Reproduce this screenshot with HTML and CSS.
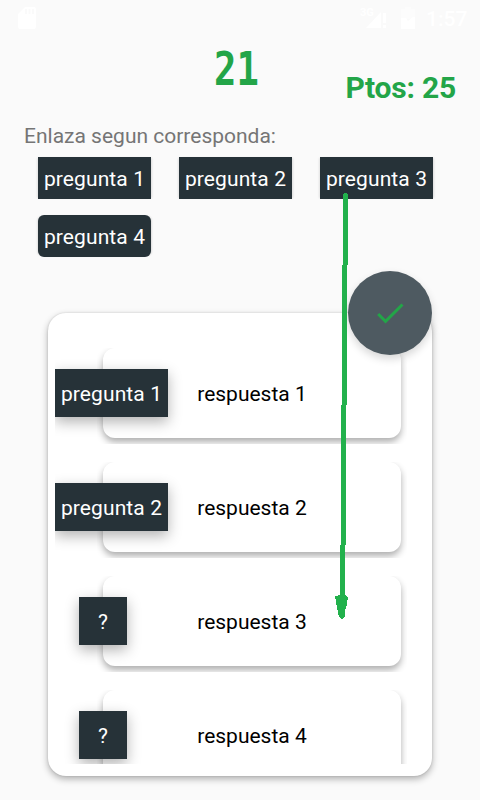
FILE: index.html
```html
<!DOCTYPE html>
<html lang="es">
<head>
<meta charset="utf-8">
<title>Enlaza</title>
<link rel="stylesheet" href="styles.css">
</head>
<body>
<div class="screen">
  <header class="status">
    <svg class="sd" width="18" height="22" viewBox="0 0 18 22"><path fill="#fff" fill-rule="evenodd" d="M7 0H16Q18 0 18 2V20Q18 22 16 22H2Q0 22 0 20V7ZM7 2V7H9V2ZM10.500 2V7H12.500V2ZM14 2V7H16V2Z"/></svg>
    <div class="status-right">
      <span class="net">3G</span>
      <svg class="signal" width="22" height="20" viewBox="0 0 22 20"><path fill="#fff" d="M0 20L15 4V20ZM17 5H20V15H17ZM17 17H20V20H17Z"/></svg>
      <svg class="battery" width="14" height="22" viewBox="0 0 14 22"><path fill="#fcfcfc" d="M4 0H10V2H14V12H0V2H4Z"/><path fill="#fff" d="M0 11H5L7 14L12 10H14V22H0Z"/></svg>
      <span class="clock">1:57</span>
    </div>
  </header>
  <div class="score-bar">
    <span class="timer">21</span>
    <span class="points">Ptos: 25</span>
  </div>
  <p class="hint">Enlaza segun corresponda:</p>
  <div class="questions">
    <div class="chip">pregunta 1</div>
    <div class="chip">pregunta 2</div>
    <div class="chip">pregunta 3</div>
    <div class="chip rounded">pregunta 4</div>
  </div>
  <main class="panel">
    <div class="list">
      <div class="row"><div class="clip"><div class="answer">respuesta 1</div></div><div class="slot"><span class="badge">pregunta 1</span></div></div>
      <div class="row"><div class="clip"><div class="answer">respuesta 2</div></div><div class="slot"><span class="badge">pregunta 2</span></div></div>
      <div class="row"><div class="clip"><div class="answer">respuesta 3</div></div><div class="slot"><span class="badge empty">?</span></div></div>
      <div class="row"><div class="clip"><div class="answer">respuesta 4</div></div><div class="slot"><span class="badge empty">?</span></div></div>
    </div>
    <button class="fab" aria-label="Comprobar"><svg width="30" height="30" viewBox="0 0 24 24"><path fill="#23a548" d="M9 16.170L4.830 12l-1.420 1.410L9 19 21 7l-1.410-1.410z"/></svg></button>
  </main>
  <svg class="arrow" width="480" height="800" viewBox="0 0 480 800" shape-rendering="crispEdges"><path fill="#22b14c" d="M343 195L344 193H347L348 195V265H347V405H346V545H345V595L348 597L347 604L345 611V616L342 619L339 617L337 608L335 596L340 595V545H341V405H342V265H343Z"/></svg>
</div>
</body>
</html>
```
FILE: styles.css
```css
* { box-sizing: border-box; }
body { margin: 0; font-family: Roboto, sans-serif; background: #fafafa; }
.screen { position: relative; width: 480px; height: 800px; overflow: hidden; background: #fafafa; }
.status { display: flex; justify-content: space-between; height: 36px; padding: 7px 12px 0 18px; color: #fff; }
.status-right { display: flex; align-items: flex-start; }
.net { font-size: 11px; line-height: 12px; font-weight: 700; width: 6px; }
.signal { margin: 1px 13px 0 0; }
.battery { margin-right: 11px; }
.clock { width: 42px; font-size: 21px; line-height: 25px; font-weight: 500; }
.score-bar { display: flex; justify-content: space-between; height: 86px; color: #23a548; }
.timer { margin-left: 214px; height: 64px; font: 700 46.5px/66px "DejaVu Sans Mono", monospace; transform: scaleX(.8); transform-origin: left; }
.points { padding: 34px 24px 0 0; font-size: 30px; line-height: 35px; font-weight: 700; letter-spacing: -.2px; white-space: nowrap; }
.hint { margin: 0 24px; height: 35px; font-size: 21px; line-height: 28px; color: #757575; }
.questions { display: grid; grid-template-columns: repeat(3, 113px); gap: 16px 28px; margin-left: 38px; }
.chip { height: 42px; background: #263238; color: #fff; font-size: 21px; line-height: 44px; letter-spacing: .1px; text-align: center; white-space: nowrap; box-shadow: 2px 0 2px -1px rgba(0,0,0,.12), -2px 0 2px -1px rgba(0,0,0,.1); }
.rounded { border-radius: 6px; }
.panel { position: relative; width: 384px; height: 463px; margin: 56px 0 0 48px; padding: 12px 0 12px 7px; border-radius: 18px; background: #fff; box-shadow: 0 3px 7px rgba(0,0,0,.3), 0 0 2px rgba(0,0,0,.15); }
.list { height: 439px; overflow: hidden; padding-top: 17px; }
.row { display: grid; height: 114px; width: 352px; overflow: hidden; }
.clip { grid-area: 1 / 1; margin: 6px 0 6px 42px; padding: 0 6px; height: 96px; overflow: hidden; }
.answer { height: 90px; border-radius: 12px; background: #fff; color: #000; font-size: 21px; line-height: 92px; text-align: center; box-shadow: 0 4px 7px rgba(0,0,0,.32); }
.slot { grid-area: 1 / 1; display: flex; justify-content: center; width: 96px; height: 48px; margin-top: 27px; }
.badge { flex: none; width: 113px; height: 48px; margin-left: 17px; background: #263238; color: #fff; font-size: 21px; line-height: 50px; letter-spacing: .1px; text-align: center; white-space: nowrap; box-shadow: 0 5px 13px rgba(0,0,0,.3); }
.badge.empty { width: 48px; margin-left: 0; }
.fab { position: absolute; left: 300px; top: -42px; width: 84px; height: 84px; display: grid; place-items: center; padding: 0; border: 0; border-radius: 50%; background: #4e5a61; box-shadow: 0 4px 9px rgba(0,0,0,.16); }
.fab svg { width: 36px; height: 36px; }
.arrow { position: absolute; left: 0; top: 0; pointer-events: none; }
```
